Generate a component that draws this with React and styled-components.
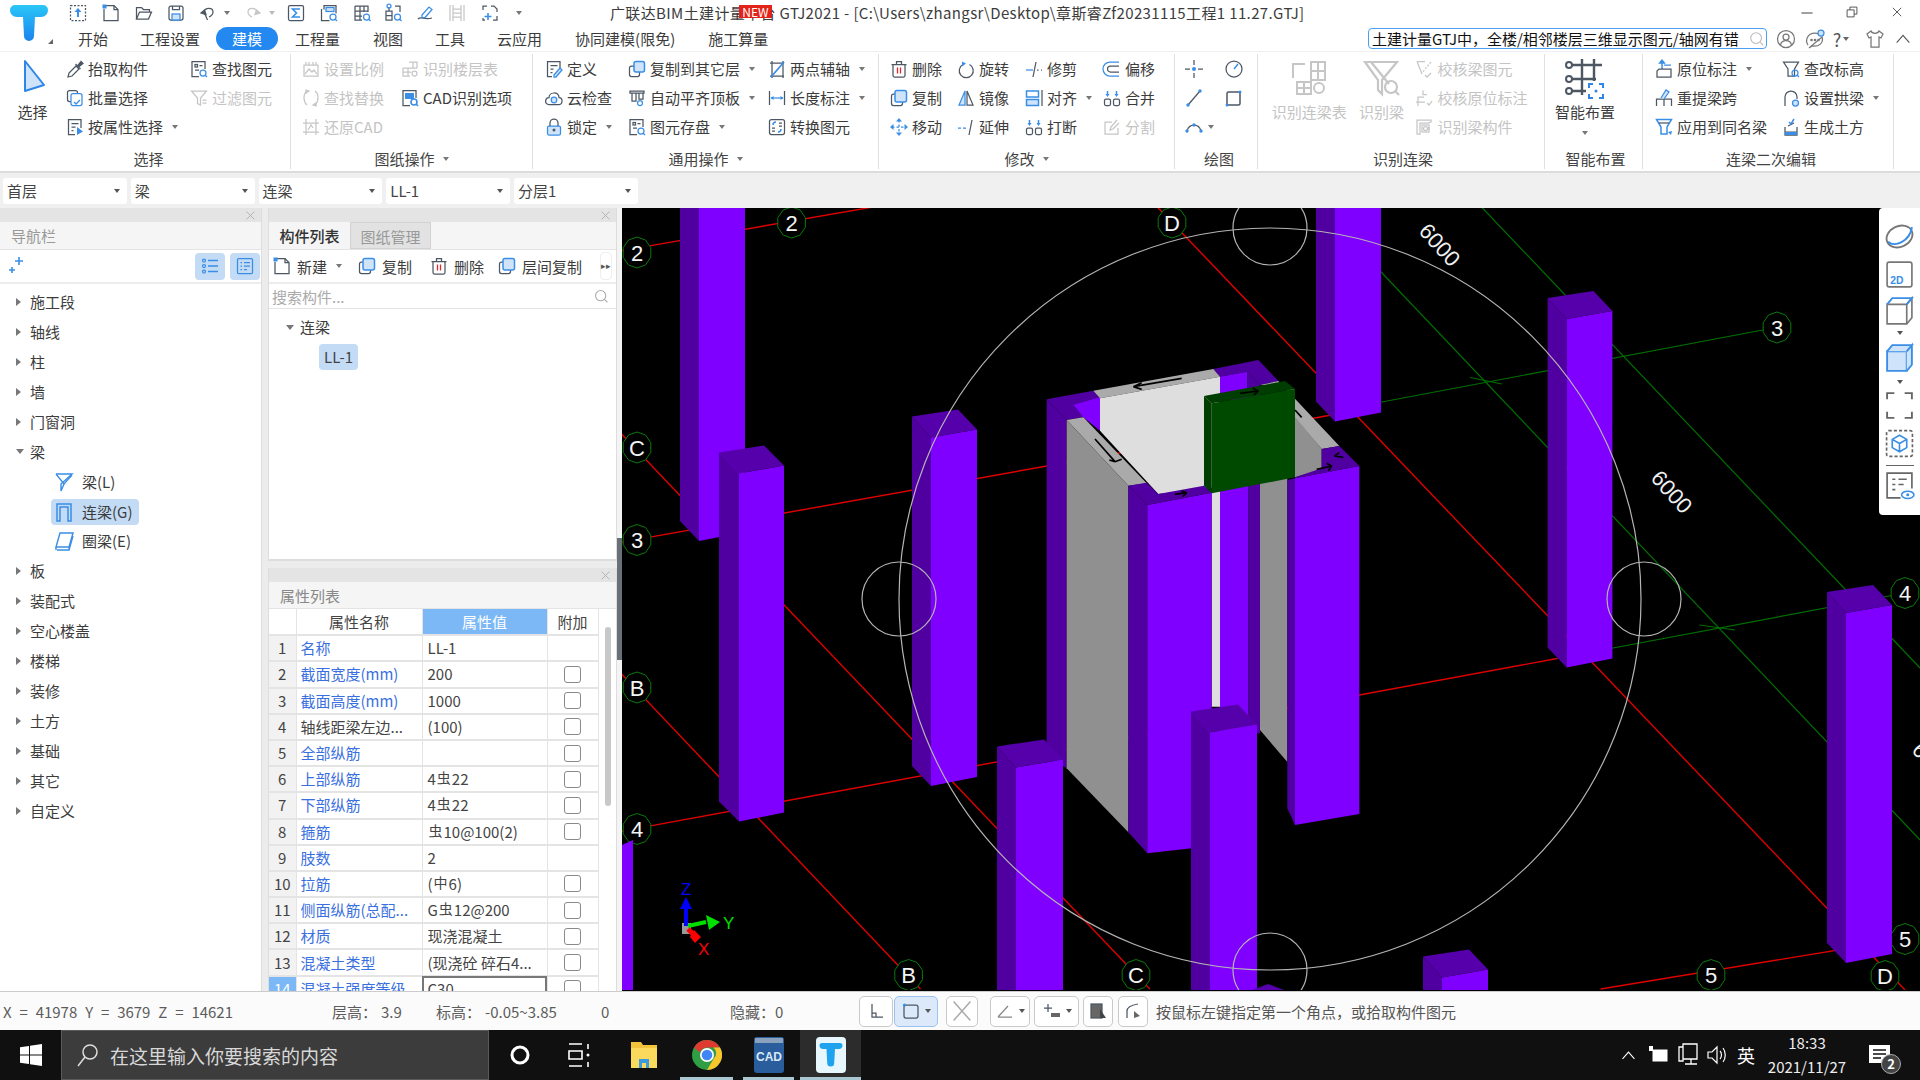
import React from 'react';
import styled, {createGlobalStyle} from 'styled-components';

const Global = createGlobalStyle`
    html, body {
        margin: 0;
        width: 1920px;
        height: 1080px;
        overflow: hidden;
        background: #f0f0f0;
    }
    * { box-sizing: border-box; }
    body {
        font-family: "Noto Sans CJK SC", "Liberation Sans", sans-serif;
        font-size: 15px;
        color: #3c3c3c;
    }
`;

const ac = 'var(--ac)', fl = 'var(--fl)';

// all small toolbar pictures, 20x20
const glyphs = {
    upload: <><rect x="2.5" y="2.5" width="15" height="15" strokeDasharray="2 1.5"/><path d="M10 14V7" stroke={ac} strokeWidth="2"/><path d="M6.5 9L10 5l3.5 4z" fill={ac} stroke="none"/></>,
    newDoc: <><path d="M5 2.5h8l4 4v11H3V6"/><path d="M13 2.5v4h4"/><rect x="1.5" y="1.5" width="4" height="4" fill={ac} stroke="none"/></>,
    open: <><path d="M2.5 16V4.500h5l2 2h6v2.500"/><path d="M2.500 16l3-7h12l-3 7z"/></>,
    save: <><rect x="3" y="3" width="14" height="14" rx="2"/><rect x="6" y="11" width="8" height="6" fill={fl} stroke={ac}/><path d="M6.500 3v3.500h7V3"/></>,
    undo: <><path d="M6 9l3.500 8M6 9c1-5 9-5 9 0 0 2.500-2 4-4 5"/><path d="M3 10l3.500-3 1.500 4.500z" fill="currentColor"/></>,
    redo: <><path d="M14 9c-1-5-9-5-9 0 0 2.500 2 4 4 5"/><path d="M17 10l-3.500-3-1.500 4.500z" fill="currentColor"/></>,
    sigma: <><rect x="2.500" y="2.500" width="15" height="15" rx="1.500"/><path d="M14 6H6.500l4 4-4 4H14" stroke={ac} strokeWidth="1.600"/></>,
    report: <><path d="M5 6.500V2.500h12v8"/><path d="M2.500 6v11.500h8"/><rect x="7" y="4.500" width="8" height="4" fill={fl} stroke={ac}/><circle cx="14" cy="14" r="3" stroke={ac}/><path d="M16 16l2 2" stroke={ac}/></>,
    grid: <><path d="M3 3h13v6M3 3v14h7M3 8h13M3 13h7M8 3v14M12 3v6"/><circle cx="14.500" cy="14" r="3" stroke={ac}/><path d="M16.500 16l2 2" stroke={ac}/></>,
    nodes: <><path d="M3 8h6v9H3zM12 3h5v6M3 12.500h6M6 8V4"/><circle cx="6" cy="3" r="2" stroke={ac}/><circle cx="14.500" cy="14" r="3" stroke={ac}/><path d="M16.500 16l2 2" stroke={ac}/></>,
    pen: <><path d="M3 16c3-3 6 1 14-1"/><path d="M7 12l7-8 3 2.500-7 8H7z" stroke={ac}/></>,
    ladder: <><path d="M3 2v16M6 2v16M14 2v16M17 2v16M6 6h8M6 10h8M6 14h8"/></>,
    addDoc: <><path d="M3 7V3h4M11 3h3l3 3v3M17 13v4h-4M5 17H3v-2"/><path d="M8 10v7M4.500 13.500h7" stroke={ac} strokeWidth="1.600"/></>,
    pick: <><path d="M3 18l1-4 7-7 3 3-7 7z"/><path d="M10.500 5l5 5M12.500 7l3.500-4.500 2 2-4.500 3.500" fill="#4d5763"/></>,
    batch: <><rect x="2.500" y="2.500" width="10" height="11" rx="2"/><rect x="6" y="5.500" width="11" height="12" rx="2" fill="#fff" stroke={ac}/><path d="M9 14l2 2 4-4" stroke={ac}/></>,
    attr: <><path d="M16 11V2.500H3.500v15H10"/><path d="M6.500 6.500h7M6.500 10h4M6.500 13.500h2"/><path d="M12 10l6 4.500-6 3.500z" fill={ac} stroke="none"/></>,
    find: <><path d="M10 17.500H3v-15h13V10"/><rect x="6" y="5.500" width="2.500" height="2.500"/><path d="M10.500 6.500h3M6 11h4"/><circle cx="14" cy="14" r="3" stroke={ac}/><path d="M16 16l2 2" stroke={ac}/></>,
    filter: <><path d="M2.500 3h15l-6 7v7l-3-1.500V10z"/><path d="M13.500 12h4M13.500 15h4"/></>,
    scale: <><path d="M3 6h14v11H3zM5 3v3M8 3v3M12 3v3M15 3v3"/><path d="M4 15l4-5 3 3 2-2 3 4"/></>,
    table: <><path d="M3 9h14M3 9v8h7M8 9v8M3 13h8M9 3h8v6M13 3v6"/><circle cx="14.500" cy="14.500" r="2.500"/></>,
    replace: <><path d="M6 3C2 6 2 13 6 17M14 3c4 3 4 10 0 14"/><path d="M8 3l-3-1v3zM12 17l3 1v-3z" fill="currentColor"/></>,
    restore: <><path d="M2 6h16M2 15h16M5 2v16M15 2v16"/><path d="M7 13l3-5 2 3" /></>,
    cad: <><path d="M10 17.500H3v-15h13V10"/><rect x="5" y="5" width="9" height="6" fill={ac} stroke="none"/><circle cx="14" cy="14" r="3" stroke={ac} strokeWidth="1.600"/><path d="M16 16l2 2" stroke={ac} strokeWidth="1.600"/></>,
    define: <><path d="M16 9V2.500H3.500v15H8"/><path d="M6.500 6.500h7M6.500 10h3M6.500 13.500h2"/><path d="M10 16l6-7 2 2-6 7h-2z" stroke={ac} fill={fl}/></>,
    cloud: <><path d="M5 16.500c-5 0-4-7 0-7C5 4 15 3 15 9.500c4 0 4 7 0 7z"/><circle cx="10" cy="12" r="2.800" stroke={ac} fill={fl}/></>,
    lock: <><rect x="3.500" y="9" width="13" height="9" rx="1.500" fill={fl} stroke={ac}/><path d="M6 9V6a4 4 0 0 1 8 0v3"/><circle cx="10" cy="13" r="1.500" fill="#4d5763" stroke="none"/></>,
    copyTo: <><rect x="2.500" y="7" width="10" height="10.500" rx="2"/><rect x="7" y="2.500" width="10.500" height="10.500" rx="2" fill={fl} stroke={ac} strokeWidth="1.500"/></>,
    levelTop: <><path d="M3 3h14v2H3zM5 5v8h4V5M12 5v6h4V5"/><circle cx="13" cy="15" r="2.500" stroke={ac}/></>,
    diskFind: <><path d="M10 17.500H3v-15h13V10"/><rect x="6" y="5.500" width="2.500" height="2.500"/><path d="M10.500 6.500h3M6 11h4"/><circle cx="14" cy="14" r="3" stroke={ac}/><path d="M16 16l2 2" stroke={ac}/></>,
    twoAxis: <><path d="M3 4h14M3 17h14M5 2v17M16 2v17"/><path d="M4 18L17 3" stroke={ac} strokeWidth="1.800"/></>,
    dim: <><path d="M2.500 3v14M17.500 3v14"/><path d="M4 10h12" stroke={ac}/><path d="M3.500 10l3-2v4zM16.500 10l-3-2v4z" fill={ac} stroke="none"/></>,
    convert: <><rect x="2.500" y="2.500" width="15" height="15" rx="2"/><path d="M6 8c0-2 1-3 3-3M14 12c0 2-1 3-3 3" stroke={ac} strokeWidth="1.500"/><path d="M12 6h3M5 14h3M12 9h3M5 11h3"/></>,
    del: <><path d="M4 5.500h12v11a1.500 1.500 0 0 1-1.500 1.500h-9A1.500 1.500 0 0 1 4 16.500zM2.500 5.500h15M7.500 5.500V2.500h5v3"/><path d="M8.500 8.500v6M11.500 8.500v6" stroke="#e0282e" strokeWidth="1.300"/></>,
    rotate: <><path d="M7 5.500a7 7 0 1 0 6.500 0"/><path d="M6 2.500v5l4-3z" fill={ac} stroke="none"/></>,
    mirror: <><path d="M9 3L3 17h6z" stroke={ac} fill={fl}/><path d="M11 3l6 14h-6z"/></>,
    trim: <><path d="M2 11h7" stroke={ac}/><path d="M13 11h1.500M17 11h1" strokeDasharray="2 1"/><path d="M9 18L12 3"/></>,
    offset: <><path d="M17 3H8a6.800 6.800 0 0 0 0 14h9" stroke={ac}/><path d="M17 7H8.500a2.800 2.800 0 0 0 0 6H17"/></>,
    copy: <><rect x="2.500" y="6" width="11" height="11.500" rx="2"/><rect x="6" y="2.500" width="11.500" height="11.500" rx="2" fill={fl} stroke={ac} strokeWidth="1.500"/></>,
    alignB: <><path d="M18 2v16"/><rect x="2.500" y="3" width="12" height="6" fill="#fff" stroke={ac} strokeWidth="1.500"/><rect x="2.500" y="11.500" width="12" height="6" fill={fl} stroke={ac} strokeWidth="1.500"/></>,
    merge: <><rect x="2.500" y="11" width="6" height="6.500" rx="1.500"/><rect x="11.500" y="11" width="6" height="6.500" rx="1.500"/><path d="M5.500 3v3M14.500 3v3" stroke={ac} strokeWidth="1.500"/><path d="M5.500 9l-2-3h4zM14.500 9l-2-3h4z" fill={ac} stroke="none"/></>,
    move: <><path d="M10 3v14M3 10h14" stroke={ac} strokeDasharray="2.500 2"/><path d="M10 1l-3 3.500h6zM10 19l-3-3.500h6zM1 10l3.500-3v6zM19 10l-3.500-3v6z" fill={ac} stroke="none"/></>,
    extend: <><path d="M2 11h8" stroke={ac} strokeDasharray="3 2"/><path d="M13 18L16 3"/></>,
    split: <><path d="M15 3L9 10l-1 3 3-1 6-6M16 11v6H3V5h7"/></>,
    point: <><path d="M10 1v5M10 14v5M1 10h5M14 10h5"/><circle cx="10" cy="10" r="2" fill={ac} stroke="none"/></>,
    dial: <><circle cx="10" cy="10" r="8"/><path d="M10 10l4-5" stroke={ac} strokeWidth="1.500"/></>,
    lineTool: <><path d="M4 17L16 3"/><circle cx="4" cy="17" r="1.700" fill={ac} stroke="none"/><circle cx="16" cy="3" r="1.700" fill={ac} stroke="none"/></>,
    rectTool: <><rect x="3" y="4" width="13" height="13" rx="1.500" strokeWidth="1.500"/><circle cx="16" cy="4" r="1.500" fill={ac} stroke="none"/><circle cx="3" cy="17" r="1.500" fill={ac} stroke="none"/></>,
    arc: <><path d="M3 14c2-8 12-8 14 0"/><circle cx="3" cy="14" r="1.700" fill={ac} stroke="none"/><circle cx="10" cy="8" r="1.700" fill={ac} stroke="none"/><circle cx="17" cy="14" r="1.700" fill={ac} stroke="none"/></>,
    check: <><path d="M3 2.500h8M3 2.500L8 15"/><path d="M17 3l-9 11" strokeDasharray="2 1.500"/><path d="M11 16l2 2 4-4"/></>,
    checkAnno: <><path d="M9 2.500v4h4M4 18V9h6M2 14h9M13 15l2 2 3-4"/></>,
    beamParts: <><path d="M3 3h14v2l-3 1H6v11H3zM15 13v-3"/><rect x="8" y="8" width="7" height="7"/><circle cx="11.500" cy="11.500" r="2"/></>,
    anno: <><path d="M8 2v8" stroke={ac} strokeWidth="1.500"/><path d="M8 1L5.500 4h5zM10 6h7" fill={ac} stroke={ac}/><path d="M5 10h12v8H3v-6z"/></>,
    elev: <><path d="M2.500 3h15l-4 7v7H7V10z"/><circle cx="14" cy="14" r="3" stroke={ac}/><path d="M16 16l2 2" stroke={ac}/></>,
    respan: <><path d="M2.500 18v-7h15v7M10 11v7"/><path d="M7 10l5-8 3 2-5 7" stroke={ac} fill={fl}/></>,
    arch: <><path d="M4 18v-9a6 6 0 0 1 12 0v2"/><circle cx="14.500" cy="15" r="3" fill={fl} stroke={ac}/></>,
    sameName: <><path d="M2.500 2.500h15L13 10v7H7v-7z" stroke={ac} strokeWidth="1.500"/><path d="M5 6h10"/><path d="M14 15l3 3 1-4z" fill={ac} stroke="none"/></>,
    earth: <><path d="M4 10v8h12v-8M4 15h12M7 9l6-3"/><rect x="4" y="15" width="12" height="3" fill={ac} stroke="none"/><path d="M8 5l2 2 3-5" stroke={ac} strokeWidth="1.500"/></>,
    sparkle: <><path d="M12 1v8M8 5h8M5 11v6M2 14h6" stroke={ac} strokeWidth="1.600"/></>,
    listView: <><circle cx="4" cy="4.500" r="1.500" stroke={ac}/><circle cx="4" cy="10" r="1.500" stroke={ac}/><circle cx="4" cy="15.500" r="1.500" stroke={ac}/><path d="M8 4.500h10M8 10h10M8 15.500h10" stroke={ac} strokeWidth="1.400"/></>,
    detailView: <><rect x="2.500" y="2.500" width="15" height="15" rx="1" stroke={ac}/><path d="M5.500 6.500h1.500M9 6.500h6M5.500 10h1.500M9 10h6M5.500 13.500h1.500M9 13.500h3" stroke={ac}/></>,
    beamL: <><path d="M2 2h16L7 12v7l3-7" stroke={ac} strokeWidth="1.400"/><path d="M2 2l8 10 8-9" stroke={ac} strokeWidth="1.400"/></>,
    beamG: <><path d="M3 19V2h14v17h-3V5H6v14z" stroke={ac} strokeWidth="1.500"/></>,
    beamE: <><path d="M6 2h13l-4 14H2z" stroke={ac} strokeWidth="1.400"/><path d="M3 19h12l4-14M2 16v3M15 16v3" stroke={ac} strokeWidth="1.400"/></>,
    search: <><circle cx="9" cy="9" r="6"/><path d="M13.500 13.500L17 17"/></>,
    user: <><circle cx="10" cy="10" r="8.500"/><circle cx="10" cy="8" r="3"/><path d="M4.500 16c1-6 10-6 11 0"/></>,
    chat: <><path d="M3 16c-3-4-1-12 7-12 2 0 3 1 3 1M17 8c2 6-3 10-10 9l-3 2z"/><circle cx="6.500" cy="11" r=".7"/><circle cx="10" cy="11" r=".7"/><circle cx="13.500" cy="11" r=".7"/><circle cx="16" cy="4" r="3" fill={fl} stroke={ac}/></>,
    shirt: <><path d="M6 2L2 5l2 4 2-1v10h8V8l2 1 2-4-4-3c-1 3-7 3-8 0z"/></>,
    up: <><path d="M3 14l7-8 7 8"/></>,
    thin: <><path d="M3 10h14"/></>,
    win2: <><path d="M7 7V3h10v10h-4M3 7h10v10H3z"/></>,
    close: <><path d="M4 4l12 12M16 4L4 16"/></>
};

const Ic = styled.svg`
    width: ${p => p.$size || 20}px;
    height: ${p => p.$size || 20}px;
    flex: none;
    display: block;
    fill: none;
    stroke: currentColor;
    stroke-width: 1.25;
    color: ${p => p.$off ? '#c6c6c6' : (p.$tint || '#4d5763')};
    --ac: ${p => p.$off ? '#c6c6c6' : '#3a8ee6'};
    --fl: ${p => p.$off ? '#f2f2f2' : '#cfe3fa'};
`;

const G = ({n, off, size, tint}) => (
    <Ic viewBox="0 0 20 20" $off={off} $size={size} $tint={tint}>{glyphs[n]}</Ic>
);

const Page = styled.div`
    width: 1920px;
    height: 1080px;
    display: flex;
    flex-direction: column;
    overflow: hidden;
`;

/* ---- top of the window ---- */
const Header = styled.div`
    height: 51px;
    display: flex;
    background: #fff;
`;
const LogoCell = styled.div`
    width: 62px;
    position: relative;
    padding: 5px 0 0 10px;
`;
const LogoCorner = styled.i`
    position: absolute;
    left: 48px;
    top: 39px;
    border-style: solid;
    border-width: 0 0 5px 5px;
    border-color: transparent transparent #666 transparent;
`;
const HeadRows = styled.div`
    flex: 1;
    display: flex;
    flex-direction: column;
`;
const TitleRow = styled.div`
    height: 26px;
    display: flex;
    align-items: center;
`;
const Quick = styled.div`
    width: 548px;
    display: flex;
    align-items: center;
`;
const QuickSlot = styled.div`
    width: ${p => p.$w}px;
    display: flex;
    align-items: center;
    justify-content: ${p => p.$left ? 'flex-start' : 'center'};
    padding-left: ${p => p.$left || 0}px;
    gap: 6px;
`;
const Title = styled.div`
    position: relative;
    white-space: nowrap;
    line-height: 20px;
    letter-spacing: .37px;
`;
const NewBadge = styled.span`
    position: absolute;
    left: 129px;
    top: 2px;
    width: 33px;
    height: 13px;
    background: #e2231a;
    color: #fff;
    font-size: 12px;
    line-height: 13px;
    letter-spacing: 0;
    text-align: center;
`;
const WinBtns = styled.div`
    margin-left: auto;
    padding-right: 1px;
    display: flex;
`;
const WinBtn = styled.div`
    width: 45px;
    display: flex;
    justify-content: center;
`;
const TabRow = styled.div`
    height: 25px;
    display: flex;
    align-items: center;
`;
const Tab = styled.div`
    height: 23px;
    padding: 0 ${p => p.$wide ? 17 : 16}px;
    line-height: 23px;
    white-space: nowrap;
    border-radius: 12px;
    background: ${p => p.$on ? '#2389f0' : 'transparent'};
    color: ${p => p.$on ? '#fff' : '#3c3c3c'};
`;
const HelpBox = styled.div`
    margin-left: auto;
    width: 399px;
    height: 21px;
    border: 1px solid #4aa0f0;
    border-radius: 4px;
    padding-left: 3px;
    display: flex;
    align-items: center;
    justify-content: space-between;
    color: #111;
    line-height: 19px;
    white-space: nowrap;
    overflow: hidden;
`;
const HeadIcons = styled.div`
    display: flex;
    align-items: center;
    padding-right: 8px;
`;
const HeadIcon = styled.div`
    width: ${p => p.$w}px;
    display: flex;
    justify-content: center;
    align-items: center;
    color: #555;
    font-size: 18px;
    line-height: 20px;
`;

const Caret = styled.i`
    flex: none;
    display: inline-block;
    margin-left: ${p => p.$ml || 0}px;
    margin-top: ${p => p.$mt || 0}px;
    border-style: solid;
    border-width: 4px 3.5px 0 3.5px;
    border-color: ${p => p.$c || '#777'} transparent transparent transparent;
`;

/* ---- ribbon ---- */
const Ribbon = styled.div`
    height: 122px;
    display: flex;
    background: #fff;
    border-top: 1px solid #f0f0f0;
    border-bottom: 2px solid #dcdcdc;
`;
const Group = styled.div`
    width: ${p => p.$w}px;
    display: flex;
    flex-direction: column;
    border-right: 1px solid #e0e0e0;
    margin: 2px 0 2px 0;
`;
const GroupBody = styled.div`
    height: 95px;
    display: flex;
    padding-left: ${p => p.$pl || 0}px;
`;
const GroupFoot = styled.div`
    flex: 1;
    display: flex;
    align-items: center;
    justify-content: center;
    padding-left: ${p => p.$pl || 0}px;
    color: #444;
    white-space: nowrap;
`;
const Col = styled.div`
    width: ${p => p.$w}px;
    display: flex;
    flex-direction: column;
`;
const ToolRow = styled.div`
    height: 29px;
    display: flex;
    align-items: center;
    gap: 3px;
    white-space: nowrap;
    line-height: 20px;
    color: ${p => p.$off ? '#c4c4c4' : '#3c3c3c'};
`;
const BigTool = styled.div`
    width: ${p => p.$w}px;
    display: flex;
    flex-direction: column;
    align-items: center;
    white-space: nowrap;
    color: ${p => p.$off ? '#c4c4c4' : '#3c3c3c'};
    line-height: 20px;
`;
const BigPic = styled.div`
    height: 46px;
    padding-top: 4px;
    margin-bottom: 2px;
`;
const Tool = ({g, t, off, menu}) => (
    <ToolRow $off={off}>
        <G n={g} off={off}/>
        <span>{t}</span>
        {menu && <Caret $ml={6}/>}
    </ToolRow>
);
const IconRow = styled.div`
    height: 29px;
    display: flex;
    align-items: center;
    gap: 4px;
`;

/* ---- selectors ---- */
const SelectBar = styled.div`
    height: 35px;
    padding: 5px 3px 4px;
    display: flex;
    gap: 4px;
    background: #f0f0f0;
`;
const Select = styled.div`
    width: 123.750px;
    background: #fff;
    border-radius: 3px;
    padding: 0 7px 0 4px;
    display: flex;
    align-items: center;
    justify-content: space-between;
    line-height: 20px;
    color: #444;
`;

/* ---- panels ---- */
const Main = styled.div`
    height: 783px;
    display: flex;
    background: #ececec;
`;
const NavPanel = styled.div`
    width: 262px;
    display: flex;
    flex-direction: column;
    background: #fff;
    border-right: 1px solid #ddd;
`;
const Strip = styled.div`
    height: 14px;
    flex: none;
    background: #e4e4e4;
    display: flex;
    justify-content: flex-end;
    align-items: center;
    padding-right: 4px;
`;
const PanelHead = styled.div`
    height: 28px;
    flex: none;
    padding-left: 11px;
    display: flex;
    align-items: center;
    background: #f5f5f5;
    color: #999;
    border-bottom: 1px solid #e4e4e4;
`;
const ToolStrip = styled.div`
    height: 34px;
    flex: none;
    display: flex;
    align-items: center;
    background: #fff;
    border-bottom: 2px solid #ececec;
`;
const SparkBox = styled.span`
    margin-left: 7px;
`;
const ViewToggle = styled.div`
    width: 30px;
    height: 27px;
    margin-left: ${p => p.$ml || 0}px;
    border-radius: 4px;
    background: #c3dbf4;
    display: flex;
    align-items: center;
    justify-content: center;
`;
const Tree = styled.div`
    padding-top: 3px;
    flex: 1;
`;
const TreeRow = styled.div`
    height: 29.940px;
    display: flex;
    align-items: center;
    padding-left: ${p => p.$child ? 51 : 16}px;
    line-height: 20px;
    white-space: nowrap;
`;
const Arrow = styled.i`
    width: 14px;
    flex: none;
    &::before {
        content: '';
        display: block;
        margin-left: 0;
        border-style: solid;
        border-width: ${p => p.$open ? '5px 4px 0 4px' : '4px 0 4px 5px'};
        border-color: ${p => p.$open ? '#777 transparent transparent transparent' : 'transparent transparent transparent #777'};
        width: 0;
    }
`;
const ChildPill = styled.div`
    height: 26px;
    width: 88px;
    border-radius: 4px;
    padding-left: 3px;
    display: flex;
    align-items: center;
    gap: 8px;
    background: ${p => p.$on ? '#c3dbf4' : 'transparent'};
`;
const MidColumn = styled.div`
    margin-left: 6px;
    width: 349px;
    display: flex;
    flex-direction: column;
    gap: 7px;
`;
const Gutter = styled.div`
    width: 5px;
    flex: none;
    position: relative;
    background: #f4f4f4;
`;
const Splitter = styled.div`
    position: absolute;
    left: 0;
    top: 330px;
    width: 5px;
    height: 122px;
    background: #6a7078;
`;
const ListPanel = styled.div`
    height: 353px;
    display: flex;
    flex-direction: column;
    background: #fff;
    border: solid #ddd;
    border-width: 0 1px 2px 1px;
`;
const TabHead = styled.div`
    height: 28px;
    flex: none;
    display: flex;
    background: #f5f5f5;
    border-bottom: 1px solid #e4e4e4;
`;
const PanelTab = styled.div`
    width: 81px;
    text-align: center;
    line-height: 28px;
    font-weight: ${p => p.$on ? 500 : 400};
    color: ${p => p.$on ? '#333' : '#999'};
    background: ${p => p.$on ? '#f5f5f5' : '#e2e2e2'};
    border: ${p => p.$on ? 'none' : '1px solid #d2d2d2'};
`;
const ListTool = styled.div`
    display: flex;
    align-items: center;
    gap: ${p => p.$gap || 5}px;
    margin-left: ${p => p.$ml}px;
    white-space: nowrap;
`;
const MoreBtn = styled.div`
    margin-left: 18px;
    width: 12px;
    height: 28px;
    border-radius: 4px;
    border: 1px solid #eee;
    font-size: 9px;
    line-height: 26px;
    text-align: center;
    color: #555;
`;
const SearchRow = styled.div`
    height: 25px;
    flex: none;
    padding: 0 6px 0 3px;
    display: flex;
    align-items: center;
    justify-content: space-between;
    border-bottom: 1px solid #e4e4e4;
    color: #aaa;
`;
const CompRoot = styled.div`
    margin: 8px 0 0 17px;
    height: 20px;
    display: flex;
    align-items: center;
    line-height: 20px;
`;
const CompItem = styled.div`
    margin: 7px 0 0 50px;
    width: 39px;
    height: 26px;
    border-radius: 4px;
    background: #c3dbf4;
    text-align: center;
    line-height: 26px;
    color: #444;
`;
const AttrPanel = styled.div`
    flex: 1;
    min-height: 0;
    display: flex;
    flex-direction: column;
    background: #fff;
    border: solid #ddd;
    border-width: 0 1px;
`;
const AttrHead = styled(PanelHead)`
    color: #888;
    height: 27px;
`;
const AttrBody = styled.div`
    flex: 1;
    min-height: 0;
    display: flex;
    overflow: hidden;
`;
const AttrTable = styled.table`
    width: 329px;
    height: 0;
    flex: none;
    table-layout: fixed;
    border-collapse: collapse;
    line-height: 20px;
    td, th {
        height: 26.200px;
        padding: 0;
        border: solid #e4e4e4;
        border-width: 0 1px 2px 0;
        font-weight: 400;
        white-space: nowrap;
        overflow: hidden;
    }
`;
const TableCol = styled.col`
    width: ${p => p.$w}px;
`;
const HeadCell = styled.th`
    background: ${p => p.$on ? '#7cb8f5' : '#fff'};
    color: ${p => p.$on ? '#fff' : '#444'};
`;
const NumCell = styled.td`
    text-align: center;
    background: ${p => p.$on ? '#7cb8f5' : '#f2f2f2'};
    color: ${p => p.$on ? '#fff' : '#444'};
`;
const NameCell = styled.td`
    padding-left: 4px !important;
    color: ${p => p.$plain ? '#444' : '#3a6fe0'};
`;
const ValueCell = styled.td`
    padding-left: 5px !important;
    color: #444;
    ${p => p.$on && 'outline: 2px solid #777; outline-offset: -2px;'}
`;
const CheckCell = styled.td`
    text-align: center;
`;
const CheckBox = styled.i`
    display: block;
    margin: 0 auto;
    width: 17px;
    height: 17px;
    border: 1px solid #8a8a8a;
    border-radius: 3px;
`;
const Rebar = styled.span`
    position: relative;
    top: -2px;
    font-size: 14px;
    margin: 0 1px;
`;
const ScrollTrack = styled.div`
    flex: 1;
    padding: 18px 5px 0 6px;
`;
const ScrollThumb = styled.div`
    height: 179px;
    border-radius: 5px;
    background: #c8c8c8;
`;

/* ---- canvas ---- */
const Canvas = styled.div`
    flex: 1;
    position: relative;
    background: #000;
    overflow: hidden;
`;
const SceneSvg = styled.svg`
    display: block;
`;
const SideBar = styled.div`
    position: absolute;
    right: 0;
    top: 0;
    width: 41px;
    height: 307px;
    padding-top: 9px;
    background: #fff;
    border-radius: 4px 0 0 4px;
    display: flex;
    flex-direction: column;
    align-items: center;
`;
const SideSlot = styled.div`
    height: ${p => p.$h}px;
    flex: none;
    display: flex;
    align-items: center;
    justify-content: center;
`;
const SideRule = styled.div`
    width: 28px;
    height: 1px;
    flex: none;
    background: #666;
`;

/* ---- status ---- */
const StatusBar = styled.div`
    height: 39px;
    display: flex;
    align-items: center;
    background: #fbfbfb;
    border-top: 1px solid #ccc;
    padding-left: 3px;
    white-space: nowrap;
    color: #5c5c5c;
    font-size: 15px;
`;
const Read = styled.span`
    width: ${p => p.$w}px;
    flex: none;
    word-spacing: ${p => p.$ws || 0}px;
`;
const StatusBtn = styled.div`
    width: ${p => p.$w}px;
    height: 31px;
    margin-left: ${p => p.$ml || 0}px;
    flex: none;
    border: 1px solid ${p => p.$on ? '#9cc3ef' : '#c9c9c9'};
    border-radius: 5px;
    background: ${p => p.$on ? '#dbe9fb' : '#fff'};
    display: flex;
    align-items: center;
    justify-content: center;
    gap: 4px;
`;
const Hint = styled.span`
    margin-left: 8px;
    font-size: 15px;
    color: #555;
`;

/* ---- taskbar ---- */
const Taskbar = styled.div`
    height: 50px;
    display: flex;
    background: #101010;
    color: #fff;
`;
const StartBtn = styled.div`
    width: 61px;
    display: flex;
    align-items: center;
    justify-content: center;
`;
const TaskSearch = styled.div`
    width: 428px;
    display: flex;
    align-items: center;
    padding-left: 14px;
    gap: 12px;
    background: #3c3c3c;
    border: 1px solid #5a5a5a;
    font-size: 19px;
    color: #d8d8d8;
    white-space: nowrap;
`;
const TaskSlot = styled.div`
    width: ${p => p.$w}px;
    margin-left: ${p => p.$ml || 0}px;
    display: flex;
    align-items: center;
    justify-content: center;
    background: ${p => p.$active ? '#2c2c2c' : 'transparent'};
    border-bottom: 3px solid ${p => p.$open ? '#a9c7d3' : 'transparent'};
    padding-top: 3px;
`;
const Tray = styled.div`
    margin-left: auto;
    padding-right: 13px;
    display: flex;
    align-items: stretch;
`;
const TraySlot = styled.div`
    width: ${p => p.$w}px;
    display: flex;
    align-items: center;
    justify-content: center;
    position: relative;
    font-size: ${p => p.$fs || 15}px;
`;
const Clock = styled.div`
    width: 92px;
    display: flex;
    flex-direction: column;
    align-items: center;
    justify-content: center;
    font-size: 15px;
    line-height: 24px;
    color: #eee;
`;
const NoteBadge = styled.span`
    position: absolute;
    left: 28px;
    top: 24px;
    width: 20px;
    height: 20px;
    border-radius: 50%;
    background: #444;
    border: 1px solid #aaa;
    font-size: 13px;
    font-weight: 700;
    line-height: 18px;
    text-align: center;
`;

/* ---- the 3D view ---- */
const Z = (x, y) => [620 + x * .7908, 205 + y * .5];
const purple = '#8000ff', purpleDark = '#5000a0', purpleTop = '#5500aa';

const redLines = [
    [0, 92, 320, 4], [0, 675, 960, 403], [0, 1253, 1185, 907], [1240, 1568, 1625, 1468],
    [680, 5, 1625, 1570], [0, 455, 670, 1568], [0, 935, 380, 1568]
];
const greenLines = [
    [960, 395, 1445, 250], [1185, 907, 1625, 776], [960, 130, 1644, 1270], [1090, 5, 1644, 926],
    [1075, 345, 1115, 358], [1365, 840, 1410, 850]
];
const pillars = [
    [680, 699, 745, 150, 541],
    [719, 739, 784, 473.500, 821.500],
    [912, 931, 977, 437.500, 786],
    [1316, 1335, 1381, 100, 421.500],
    [1547.600, 1566.600, 1612.400, 319, 667.500],
    [1827, 1846, 1892, 613, 963],
    [1423, 1442, 1488, 977.500, 1200]
];
const frontPillars = [
    [997, 1016, 1063, 767.500, 1200],
    [1191, 1210, 1257, 732.500, 1200]
];
const bubbles = [
    ['2', 637, 252.500], ['2', 791.600, 222.500], ['D', 1172, 222.500], ['3', 1777, 327.500],
    ['C', 637, 447.500], ['3', 637, 540], ['B', 637, 687.500], ['4', 637, 829],
    ['B', 908.600, 975], ['C', 1136, 975], ['5', 1711, 975], ['D', 1885, 976],
    ['5', 1905, 939], ['4', 1905, 593]
];

const Pillar = ({p: [xL, xM, xR, top, bot]}) => {
    const b = xL + (xR - xM);
    return (
        <>
            <polygon fill={purpleDark} points={`${xL},${top - 21} ${xM},${top} ${xM},${bot} ${xL},${bot - 20}`}/>
            <polygon fill={purple} points={`${xM},${top} ${xR},${top - 8} ${xR},${bot - 9} ${xM},${bot}`}/>
            <polygon fill={purpleTop} points={`${xL},${top - 21} ${b},${top - 28} ${xR},${top - 8} ${xM},${top}`}/>
        </>
    );
};

const Bubble = ({t, x, y}) => {
    const pts = Array.from({length: 10}, (_, i) => {
        const a = i / 10 * Math.PI * 2 + Math.PI / 10;
        return `${(x + Math.cos(a) * 14.500).toFixed(1)},${(y + Math.sin(a) * 15.500).toFixed(1)}`;
    }).join(' ');
    return (
        <>
            <polygon points={pts} fill="#000" stroke="#0b7a0b" strokeWidth="1"/>
            <text x={x} y={y + 8} textAnchor="middle" fill="#f4f4f4" fontSize="22" fontFamily='"Liberation Sans", sans-serif'>{t}</text>
        </>
    );
};

const Core = () => (
    <g transform="translate(1000 340) scale(.33333)">
        <polygon fill={purpleDark} points="140,178 200,240 200,1285 140,1245"/>
        <polygon fill={purpleDark} points="640,87 775,60 835,123 780,135 742,95 660,110"/>
        <polygon fill={purple} points="660,110 742,95 742,180 660,180"/>
        <polygon fill={purpleDark} points="742,95 780,135 780,180 742,180"/>
        <polygon fill={purpleDark} points="140,178 280,152 300,175 300,190 220,195 250,232 200,240"/>
        <polygon fill={purple} points="220,195 300,172 300,272 250,232"/>
        <polygon fill="#aaa" points="280,152 640,87 660,110 300,175"/>
        <polygon fill="#dedede" points="300,175 660,110 660,440 475,462 300,272"/>
        <polygon fill="#aaa" points="200,240 250,232 440,430 385,437"/>
        <polygon fill="#909090" points="200,240 385,437 385,1477 200,1285"/>
        <polygon fill="#aaa" points="780,135 835,123 1018,318 965,327 885,235 885,147"/>
        <polygon fill="#909090" points="885,230 965,327 965,390 885,412"/>
        <polygon fill="#dedede" points="635,450 660,450 660,1100 635,1100"/>
        <polygon fill={purple} points="660,440 745,425 745,1180 660,1180"/>
        <polygon fill={purpleDark} points="745,425 780,418 780,1180 745,1180"/>
        <polygon fill="#909090" points="780,418 862,410 862,1266 780,1170"/>
        <polygon fill={purpleDark} points="862,420 885,415 885,1455 862,1405"/>
        <polygon fill={purple} points="885,415 1078,378 1078,1422 885,1455"/>
        <polygon fill={purpleDark} points="885,412 965,385 965,327 1018,318 1078,378 885,415"/>
        <polygon fill={purpleDark} points="385,437 442,495 442,1540 385,1477"/>
        <polygon fill={purple} points="442,495 635,458 635,1518 442,1540"/>
        <polygon fill={purpleDark} points="385,437 440,428 475,462 612,437 635,458 442,495"/>
        <polygon fill="#003d00" points="612,168 855,123 885,147 635,190"/>
        <polygon fill="#003d00" points="612,168 635,190 635,460 612,437"/>
        <polygon fill="#004a00" points="635,190 885,147 885,412 635,460"/>
        <g fill="none" stroke="#000" strokeWidth="5">
            <path d="M400,140 L545,115 M400,140 L425,128 M400,140 L425,148"/>
            <path d="M285,297 L345,365 M345,365 L328,360 M345,365 L365,358"/>
            <path d="M525,463 L560,458 M560,458 L545,452 M560,458 L548,470"/>
            <path d="M720,160 L775,153 M775,153 L758,145 M775,153 L762,165"/>
            <path d="M950,388 L995,378 M995,378 L980,370 M995,378 L985,392"/>
            <path d="M1003,348 L1030,352 M1003,348 L1018,338"/>
            <path d="M885,210 L905,232"/>
        </g>
    </g>
);

const Scene = () => (
    <SceneSvg viewBox="622 208 1298 782" width="1298" height="782">
        {greenLines.map(([a, b, c, d], i) => {
            const [x1, y1] = Z(a, b), [x2, y2] = Z(c, d);
            return <line key={i} x1={x1} y1={y1} x2={x2} y2={y2} stroke="#006f00" strokeWidth="1.200"/>;
        })}
        {redLines.map(([a, b, c, d], i) => {
            const [x1, y1] = Z(a, b), [x2, y2] = Z(c, d);
            return <line key={i} x1={x1} y1={y1} x2={x2} y2={y2} stroke="#e00000" strokeWidth="1.400"/>;
        })}
        {bubbles.map(([t, x, y], i) => <Bubble key={i} t={t} x={x} y={y}/>)}
        {pillars.map((p, i) => <Pillar key={i} p={p}/>)}
        <polygon fill={purple} points="622,845 633,840 633,990 622,990"/>
        <Core/>
        {frontPillars.map((p, i) => <Pillar key={i} p={p}/>)}
        <polygon fill={purpleTop} points="1252,990 1268,984 1284,990"/>
        <g fill="none" stroke="#b4b4b4" strokeWidth="1.200">
            <circle cx="1270" cy="599" r="371"/>
            <circle cx="1270" cy="228" r="37"/>
            <circle cx="899" cy="599" r="37"/>
            <circle cx="1644" cy="599" r="37"/>
            <circle cx="1270" cy="970" r="37"/>
        </g>
        <g fill="#f0f0f0" fontSize="22" fontFamily='"Liberation Sans", sans-serif' textAnchor="middle">
            <text transform="translate(1434 250) rotate(48)">6000</text>
            <text transform="translate(1666 497) rotate(48)">6000</text>
            <text transform="translate(1927 769) rotate(48)">6000</text>
        </g>
        <g transform="translate(2 1)">
            <rect x="680" y="922" width="9" height="11" fill="#999"/>
            <path d="M684 925v-17" stroke="#0000ff" strokeWidth="4"/>
            <path d="M684 896l-6 12h12z" fill="#0000ff"/>
            <path d="M686 925l18-4" stroke="#00e000" strokeWidth="4"/>
            <path d="M718 921l-14-7 3 15z" fill="#00e000"/>
            <path d="M686 928l9 9" stroke="#ff0000" strokeWidth="5"/>
            <path d="M692 929l7 7-6 6-5-6z" fill="#ff0000"/>
            <g fontSize="17" fontFamily='"Liberation Sans", sans-serif'>
                <text x="679" y="894" fill="#0000ff">Z</text>
                <text x="721" y="928" fill="#00e000">Y</text>
                <text x="696" y="954" fill="#ff0000">X</text>
            </g>
        </g>
    </SceneSvg>
);

const Sym = ({c = '虫'}) => <Rebar>{c}</Rebar>;

const attrs = [
    ['名称', 'LL-1', false],
    ['截面宽度(mm)', '200', true],
    ['截面高度(mm)', '1000', true],
    ['轴线距梁左边...', '(100)', true, true],
    ['全部纵筋', '', true],
    ['上部纵筋', <>4<Sym/>22</>, true],
    ['下部纵筋', <>4<Sym/>22</>, true],
    ['箍筋', <><Sym/>10@100(2)</>, true],
    ['肢数', '2', false],
    ['拉筋', <>(<Sym c="中"/>6)</>, true],
    ['侧面纵筋(总配...', <>G<Sym/>12@200</>, true],
    ['材质', '现浇混凝土', true],
    ['混凝土类型', '(现浇砼 碎石4...', true],
    ['混凝土强度等级', 'C30', true]
];

const navItems = ['施工段', '轴线', '柱', '墙', '门窗洞'];
const navItemsAfter = ['板', '装配式', '空心楼盖', '楼梯', '装修', '土方', '基础', '其它', '自定义'];

const Logo = () => (
    <svg width="38" height="36" viewBox="0 0 38 36">
        <defs>
            <linearGradient id="tg" x1="0" y1="0" x2="0" y2="1">
                <stop offset="0" stopColor="#2ac6f7"/>
                <stop offset="1" stopColor="#1a84ee"/>
            </linearGradient>
        </defs>
        <path d="M5 0h28a5 5 0 0 1 5 5c0 4-3 7-7 7h-6l-1 19a5 5 0 0 1-10 0l-1-19H7C3 12 0 9 0 5a5 5 0 0 1 5-5z" fill="url(#tg)"/>
    </svg>
);

const App = () => (
    <Page>
        <Global/>
        <Header>
            <LogoCell>
                <Logo/>
                <LogoCorner/>
            </LogoCell>
            <HeadRows>
                <TitleRow>
                    <Quick>
                        <QuickSlot $w={32}><G n="upload"/></QuickSlot>
                        <QuickSlot $w={33}><G n="newDoc"/></QuickSlot>
                        <QuickSlot $w={33}><G n="open"/></QuickSlot>
                        <QuickSlot $w={32}><G n="save"/></QuickSlot>
                        <QuickSlot $w={48} $left={6}><G n="undo"/><Caret/></QuickSlot>
                        <QuickSlot $w={40} $left={3}><G n="redo" off/><Caret $c="#bbb"/></QuickSlot>
                        <QuickSlot $w={32}><G n="sigma"/></QuickSlot>
                        <QuickSlot $w={34}><G n="report"/></QuickSlot>
                        <QuickSlot $w={31}><G n="grid"/></QuickSlot>
                        <QuickSlot $w={32}><G n="nodes"/></QuickSlot>
                        <QuickSlot $w={32}><G n="pen"/></QuickSlot>
                        <QuickSlot $w={32}><G n="ladder" off/></QuickSlot>
                        <QuickSlot $w={34}><G n="addDoc"/></QuickSlot>
                        <QuickSlot $w={23}><Caret/></QuickSlot>
                    </Quick>
                    <Title>
                        广联达BIM土建计量平台 GTJ2021 - [C:\Users\zhangsr\Desktop\章斯睿Zf20231115工程1 11.27.GTJ]
                        <NewBadge>NEW</NewBadge>
                    </Title>
                    <WinBtns>
                        <WinBtn><G n="thin" size={16} tint="#444"/></WinBtn>
                        <WinBtn><G n="win2" size={14} tint="#444"/></WinBtn>
                        <WinBtn><G n="close" size={14} tint="#444"/></WinBtn>
                    </WinBtns>
                </TitleRow>
                <TabRow>
                    <Tab>开始</Tab>
                    <Tab>工程设置</Tab>
                    <Tab $on>建模</Tab>
                    <Tab $wide>工程量</Tab>
                    <Tab>视图</Tab>
                    <Tab>工具</Tab>
                    <Tab>云应用</Tab>
                    <Tab $wide>协同建模(限免)</Tab>
                    <Tab>施工算量</Tab>
                    <HelpBox>
                        土建计量GTJ中，全楼/相邻楼层三维显示图元/轴网有错
                        <G n="search" size={18} tint="#bbb"/>
                    </HelpBox>
                    <HeadIcons>
                        <HeadIcon $w={38}><G n="user" tint="#777"/></HeadIcon>
                        <HeadIcon $w={20}><G n="chat" tint="#777"/></HeadIcon>
                        <HeadIcon $w={32}>?<Caret $ml={2} $c="#666"/></HeadIcon>
                        <HeadIcon $w={36}><G n="shirt" tint="#777"/></HeadIcon>
                        <HeadIcon $w={19}><G n="up" size={18} tint="#555"/></HeadIcon>
                    </HeadIcons>
                </TabRow>
            </HeadRows>
        </Header>

        <Ribbon>
            <Group $w={291}>
                <GroupBody>
                    <BigTool $w={65}>
                        <BigPic>
                            <svg width="30" height="40" viewBox="0 0 30 40">
                                <path d="M7 3l19 24-19 6z" fill="#cfe3fa" stroke="#2f86e8" strokeWidth="2" strokeLinejoin="round"/>
                            </svg>
                        </BigPic>
                        选择
                    </BigTool>
                    <Col $w={124}>
                        <Tool g="pick" t="抬取构件"/>
                        <Tool g="batch" t="批量选择"/>
                        <Tool g="attr" t="按属性选择" menu/>
                    </Col>
                    <Col $w={100}>
                        <Tool g="find" t="查找图元"/>
                        <Tool g="filter" t="过滤图元" off/>
                    </Col>
                </GroupBody>
                <GroupFoot $pl={7}>选择</GroupFoot>
            </Group>
            <Group $w={242}>
                <GroupBody $pl={10}>
                    <Col $w={99}>
                        <Tool g="scale" t="设置比例" off/>
                        <Tool g="replace" t="查找替换" off/>
                        <Tool g="restore" t="还原CAD" off/>
                    </Col>
                    <Col $w={130}>
                        <Tool g="table" t="识别楼层表" off/>
                        <Tool g="cad" t="CAD识别选项"/>
                    </Col>
                </GroupBody>
                <GroupFoot>图纸操作<Caret $ml={8}/></GroupFoot>
            </Group>
            <Group $w={346}>
                <GroupBody $pl={11}>
                    <Col $w={83}>
                        <Tool g="define" t="定义"/>
                        <Tool g="cloud" t="云检查"/>
                        <Tool g="lock" t="锁定" menu/>
                    </Col>
                    <Col $w={140}>
                        <Tool g="copyTo" t="复制到其它层" menu/>
                        <Tool g="levelTop" t="自动平齐顶板" menu/>
                        <Tool g="diskFind" t="图元存盘" menu/>
                    </Col>
                    <Col $w={110}>
                        <Tool g="twoAxis" t="两点辅轴" menu/>
                        <Tool g="dim" t="长度标注" menu/>
                        <Tool g="convert" t="转换图元"/>
                    </Col>
                </GroupBody>
                <GroupFoot>通用操作<Caret $ml={8}/></GroupFoot>
            </Group>
            <Group $w={296}>
                <GroupBody $pl={10}>
                    <Col $w={67}>
                        <Tool g="del" t="删除"/>
                        <Tool g="copy" t="复制"/>
                        <Tool g="move" t="移动"/>
                    </Col>
                    <Col $w={68}>
                        <Tool g="rotate" t="旋转"/>
                        <Tool g="mirror" t="镜像"/>
                        <Tool g="extend" t="延伸"/>
                    </Col>
                    <Col $w={78}>
                        <Tool g="trim" t="修剪"/>
                        <Tool g="alignB" t="对齐" menu/>
                        <Tool g="merge" t="打断"/>
                    </Col>
                    <Col $w={60}>
                        <Tool g="offset" t="偏移"/>
                        <Tool g="merge" t="合并"/>
                        <Tool g="split" t="分割" off/>
                    </Col>
                </GroupBody>
                <GroupFoot>修改<Caret $ml={8}/></GroupFoot>
            </Group>
            <Group $w={83}>
                <GroupBody $pl={9}>
                    <Col $w={40}>
                        <IconRow><G n="point"/></IconRow>
                        <IconRow><G n="lineTool"/></IconRow>
                        <IconRow><G n="arc"/><Caret/></IconRow>
                    </Col>
                    <Col $w={30}>
                        <IconRow><G n="dial"/></IconRow>
                        <IconRow><G n="rectTool"/></IconRow>
                    </Col>
                </GroupBody>
                <GroupFoot $pl={6}>绘图</GroupFoot>
            </Group>
            <Group $w={287}>
                <GroupBody $pl={12}>
                    <BigTool $w={79} $off>
                        <BigPic>
                            <Ic viewBox="0 0 40 40" $size={40} $off>
                                <path d="M4 20V6h12M22 4h14v18H22zM22 13h14M29 4v18M8 24h14v12H8zM8 30h14M15 24v12" strokeWidth="2"/>
                                <circle cx="30" cy="30" r="5" strokeWidth="2"/>
                            </Ic>
                        </BigPic>
                        识别连梁表
                    </BigTool>
                    <BigTool $w={66} $off>
                        <BigPic>
                            <Ic viewBox="0 0 40 40" $size={40} $off>
                                <path d="M3 4h32L20 22v14l-4-4V22zM9 4l18 22" strokeWidth="2.200"/>
                                <circle cx="29" cy="29" r="6" strokeWidth="2.200"/>
                                <path d="M33 33l4 4" strokeWidth="2.200"/>
                            </Ic>
                        </BigPic>
                        识别梁
                    </BigTool>
                    <Col $w={130}>
                        <Tool g="check" t="校核梁图元" off/>
                        <Tool g="checkAnno" t="校核原位标注" off/>
                        <Tool g="beamParts" t="识别梁构件" off/>
                    </Col>
                </GroupBody>
                <GroupFoot $pl={4}>识别连梁</GroupFoot>
            </Group>
            <Group $w={98}>
                <GroupBody>
                    <BigTool $w={80}>
                        <BigPic>
                            <svg width="40" height="42" viewBox="0 0 40 42" fill="none">
                                <path d="M7 7h30M7 21h24M7 33h14M17 1v36M29 1v22" stroke="#4d5763" strokeWidth="2.400"/>
                                <circle cx="4" cy="7" r="3" fill="#fff" stroke="#4d5763" strokeWidth="2"/>
                                <circle cx="4" cy="21" r="3" fill="#fff" stroke="#4d5763" strokeWidth="2"/>
                                <circle cx="4" cy="33" r="3" fill="#fff" stroke="#4d5763" strokeWidth="2"/>
                                <path d="M24 30v-4h4M34 26h4v4M38 36v4h-4M28 40h-4v-4" stroke="#2f86e8" strokeWidth="2"/>
                                <circle cx="31" cy="33" r="1.500" fill="#2f86e8"/>
                            </svg>
                        </BigPic>
                        智能布置
                        <Caret $mt={9}/>
                    </BigTool>
                </GroupBody>
                <GroupFoot $pl={4}>智能布置</GroupFoot>
            </Group>
            <Group $w={251}>
                <GroupBody $pl={11}>
                    <Col $w={127}>
                        <Tool g="anno" t="原位标注" menu/>
                        <Tool g="respan" t="重提梁跨"/>
                        <Tool g="sameName" t="应用到同名梁"/>
                    </Col>
                    <Col $w={110}>
                        <Tool g="elev" t="查改标高"/>
                        <Tool g="arch" t="设置拱梁" menu/>
                        <Tool g="earth" t="生成土方"/>
                    </Col>
                </GroupBody>
                <GroupFoot $pl={6}>连梁二次编辑</GroupFoot>
            </Group>
        </Ribbon>

        <SelectBar>
            {['首层', '梁', '连梁', 'LL-1', '分层1'].map(s => (
                <Select key={s}>{s}<Caret $c="#555"/></Select>
            ))}
        </SelectBar>

        <Main>
            <NavPanel>
                <Strip><G n="close" size={13} tint="#aaa"/></Strip>
                <PanelHead>导航栏</PanelHead>
                <ToolStrip>
                    <SparkBox><G n="sparkle"/></SparkBox>
                    <ViewToggle $ml={168}><G n="listView"/></ViewToggle>
                    <ViewToggle $ml={5}><G n="detailView"/></ViewToggle>
                </ToolStrip>
                <Tree>
                    {navItems.map(t => <TreeRow key={t}><Arrow/>{t}</TreeRow>)}
                    <TreeRow><Arrow $open/>梁</TreeRow>
                    <TreeRow $child><ChildPill><G n="beamL"/>梁(L)</ChildPill></TreeRow>
                    <TreeRow $child><ChildPill $on><G n="beamG"/>连梁(G)</ChildPill></TreeRow>
                    <TreeRow $child><ChildPill><G n="beamE"/>圈梁(E)</ChildPill></TreeRow>
                    {navItemsAfter.map(t => <TreeRow key={t}><Arrow/>{t}</TreeRow>)}
                </Tree>
            </NavPanel>

            <MidColumn>
                <ListPanel>
                    <Strip><G n="close" size={13} tint="#aaa"/></Strip>
                    <TabHead>
                        <PanelTab $on>构件列表</PanelTab>
                        <PanelTab>图纸管理</PanelTab>
                    </TabHead>
                    <ToolStrip>
                        <ListTool $ml={3}><G n="newDoc"/>新建<Caret $ml={4}/></ListTool>
                        <ListTool $ml={15}><G n="copy"/>复制</ListTool>
                        <ListTool $ml={17}><G n="del"/>删除</ListTool>
                        <ListTool $ml={13}><G n="copy"/>层间复制</ListTool>
                        <MoreBtn>▸▸</MoreBtn>
                    </ToolStrip>
                    <SearchRow>
                        搜索构件...
                        <G n="search" size={17} tint="#aaa"/>
                    </SearchRow>
                    <CompRoot><Arrow $open/>连梁</CompRoot>
                    <CompItem>LL-1</CompItem>
                </ListPanel>
                <AttrPanel>
                    <Strip><G n="close" size={13} tint="#aaa"/></Strip>
                    <AttrHead>属性列表</AttrHead>
                    <AttrBody>
                        <AttrTable>
                            <colgroup>
                                <TableCol $w={27}/>
                                <TableCol $w={126}/>
                                <TableCol $w={125}/>
                                <TableCol $w={51}/>
                            </colgroup>
                            <thead>
                                <tr>
                                    <HeadCell/>
                                    <HeadCell>属性名称</HeadCell>
                                    <HeadCell $on>属性值</HeadCell>
                                    <HeadCell>附加</HeadCell>
                                </tr>
                            </thead>
                            <tbody>
                                {attrs.map(([name, value, hasCheck, plain], i) => (
                                    <tr key={i}>
                                        <NumCell $on={i === 13}>{i + 1}</NumCell>
                                        <NameCell $plain={plain}>{name}</NameCell>
                                        <ValueCell $on={i === 13}>{value}</ValueCell>
                                        <CheckCell>{hasCheck && <CheckBox/>}</CheckCell>
                                    </tr>
                                ))}
                            </tbody>
                        </AttrTable>
                        <ScrollTrack><ScrollThumb/></ScrollTrack>
                    </AttrBody>
                </AttrPanel>
            </MidColumn>

            <Gutter><Splitter/></Gutter>

            <Canvas>
                <Scene/>
                <SideBar>
                    <SideSlot $h={38}>
                        <Ic viewBox="0 0 30 30" $size={31} $tint="#777">
                            <ellipse cx="15" cy="15" rx="13" ry="10" transform="rotate(-25 15 15)" strokeWidth="1.800"/>
                            <path d="M4 20C10 26 25 20 27 6" stroke="#3a8ee6" strokeWidth="2"/>
                        </Ic>
                    </SideSlot>
                    <SideSlot $h={38}>
                        <Ic viewBox="0 0 30 30" $size={31} $tint="#777">
                            <rect x="3" y="3" width="24" height="24" rx="2" strokeWidth="1.600"/>
                            <text x="6" y="24" fontSize="10" fontWeight="700" fill="#3a8ee6" stroke="none" fontFamily='"Liberation Sans", sans-serif'>2D</text>
                        </Ic>
                    </SideSlot>
                    <SideSlot $h={34}>
                        <Ic viewBox="0 0 30 30" $size={31} $tint="#777">
                            <path d="M3 9h19v19H3zM22 9l5-6v19l-5 6" strokeWidth="1.600"/>
                            <path d="M3 9l5-6h19l-5 6" stroke="#3a8ee6" strokeWidth="1.800"/>
                        </Ic>
                    </SideSlot>
                    <SideSlot $h={12}><Caret $c="#555"/></SideSlot>
                    <SideSlot $h={36}>
                        <Ic viewBox="0 0 30 30" $size={31}>
                            <path d="M3 9h19v19H3z" fill="#cfe3fa" stroke="#3a8ee6" strokeWidth="1.800"/>
                            <path d="M22 9l5-6v19l-5 6M3 9l5-6h19l-5 6" fill="#cfe3fa" stroke="#3a8ee6" strokeWidth="1.800"/>
                        </Ic>
                    </SideSlot>
                    <SideSlot $h={14}><Caret $c="#555"/></SideSlot>
                    <SideSlot $h={32}>
                        <Ic viewBox="0 0 30 30" $size={31} $tint="#666">
                            <path d="M3 9V3h7M20 3h7v6M27 21v6h-7M10 27H3v-6" strokeWidth="1.800"/>
                        </Ic>
                    </SideSlot>
                    <SideSlot $h={44}>
                        <Ic viewBox="0 0 30 30" $size={31} $tint="#666">
                            <rect x="2.500" y="2.500" width="25" height="25" rx="2" strokeDasharray="3 2" strokeWidth="1.600"/>
                            <path d="M15 7l7 4v8l-7 4-7-4v-8zM8 11l7 4 7-4M15 15v8" stroke="#3a8ee6" strokeWidth="1.600"/>
                        </Ic>
                    </SideSlot>
                    <SideRule/>
                    <SideSlot $h={38}>
                        <Ic viewBox="0 0 30 30" $size={31} $tint="#666">
                            <path d="M16 27H3V3h24v15" strokeWidth="1.600"/>
                            <path d="M8 9h3M14 9h8M8 14h3M14 14h5M8 19h3" strokeWidth="1.500"/>
                            <ellipse cx="23" cy="24" rx="6" ry="3.500" stroke="#3a8ee6" strokeWidth="1.500"/>
                            <circle cx="23" cy="24" r="1.500" fill="#3a8ee6" stroke="none"/>
                        </Ic>
                    </SideSlot>
                </SideBar>
            </Canvas>
        </Main>

        <StatusBar>
            <Read $w={329} $ws={4.500}>X = 41978 Y = 3679 Z = 14621</Read>
            <Read $w={49}>层高：</Read>
            <Read $w={55}>3.9</Read>
            <Read $w={49}>标高：</Read>
            <Read $w={116}>-0.05~3.85</Read>
            <Read $w={129}>0</Read>
            <Read $w={45}>隐藏：</Read>
            <Read $w={84}>0</Read>
            <StatusBtn $w={34}>
                <Ic viewBox="0 0 20 20"><path d="M6 3v13h11M6 12h4v4"/></Ic>
            </StatusBtn>
            <StatusBtn $w={44} $on $ml={1}>
                <Ic viewBox="0 0 20 20"><rect x="3" y="4" width="14" height="13" rx="2"/><circle cx="3.500" cy="4" r="1.600" fill="#3a8ee6" stroke="none"/></Ic>
                <Caret $c="#555"/>
            </StatusBtn>
            <StatusBtn $w={32} $ml={8}>
                <Ic viewBox="0 0 20 20" $tint="#aaa" $size={24}><path d="M3 2l14 16M17 2L3 18"/></Ic>
            </StatusBtn>
            <StatusBtn $w={40} $ml={12}>
                <Ic viewBox="0 0 20 20" $tint="#888"><path d="M3 16h14M3 16l10-11"/></Ic>
                <Caret $c="#555"/>
            </StatusBtn>
            <StatusBtn $w={45} $ml={4}>
                <Ic viewBox="0 0 20 20"><path d="M6 3v8M2 7h8"/><rect x="9" y="12" width="9" height="4" fill="#666" stroke="none"/></Ic>
                <Caret $c="#555"/>
            </StatusBtn>
            <StatusBtn $w={30} $ml={4}>
                <Ic viewBox="0 0 20 20"><rect x="3" y="3" width="11" height="14" fill="#666"/><path d="M12 8l6 9h-6z" fill="#444" stroke="none"/></Ic>
            </StatusBtn>
            <StatusBtn $w={30} $ml={5}>
                <Ic viewBox="0 0 20 20"><path d="M4 17V10c0-4 5-6 11-7"/><path d="M11 10l6 5-6 2z" fill="#666" stroke="none"/></Ic>
            </StatusBtn>
            <Hint>按鼠标左键指定第一个角点，或拾取构件图元</Hint>
        </StatusBar>

        <Taskbar>
            <StartBtn>
                <svg width="22" height="22" viewBox="0 0 22 22" fill="#fff">
                    <path d="M0 3.200l9-1.300v8.600H0zM10 1.800L22 0v10.500H10zM0 11.500h9v8.600l-9-1.300zM10 11.500h12V22l-12-1.800z"/>
                </svg>
            </StartBtn>
            <TaskSearch>
                <svg width="22" height="24" viewBox="0 0 22 24" fill="none" stroke="#ddd" strokeWidth="1.500">
                    <circle cx="14" cy="9" r="7"/>
                    <path d="M9 14L2 23"/>
                </svg>
                在这里输入你要搜索的内容
            </TaskSearch>
            <TaskSlot $w={62}>
                <svg width="22" height="22" viewBox="0 0 22 22" fill="none" stroke="#fff" strokeWidth="3">
                    <circle cx="11" cy="11" r="8"/>
                </svg>
            </TaskSlot>
            <TaskSlot $w={56}>
                <svg width="22" height="24" viewBox="0 0 22 24" fill="none" stroke="#fff" strokeWidth="1.600">
                    <path d="M1 1h13M1 23h13M1 8h13v8H1zM20 1v5M20 19v5"/>
                    <circle cx="20" cy="12" r="1.500" fill="#fff" stroke="none"/>
                </svg>
            </TaskSlot>
            <TaskSlot $w={73}>
                <svg width="28" height="28" viewBox="0 0 28 28">
                    <path d="M1 1h10l2 3h14v23H1z" fill="#f3c33c"/>
                    <rect x="1" y="7" width="26" height="20" fill="#fbd95c"/>
                    <path d="M9 27v-9h10v9h-3v-5h-4v5z" fill="#3a9be0"/>
                </svg>
            </TaskSlot>
            <TaskSlot $w={53} $open>
                <svg width="30" height="30" viewBox="0 0 30 30">
                    <circle cx="15" cy="15" r="15" fill="#2f9e44"/>
                    <path d="M15 0a15 15 0 0 1 13 7.500H15a7.500 7.500 0 0 0-7 5L2 7.500A15 15 0 0 1 15 0z" fill="#e03a30"/>
                    <path d="M28 7.500A15 15 0 0 1 15 30l6.500-11a7.500 7.500 0 0 0 0-11.500z" fill="#f7c52c"/>
                    <circle cx="15" cy="15" r="7" fill="#fff"/>
                    <circle cx="15" cy="15" r="5.300" fill="#4285f4"/>
                </svg>
            </TaskSlot>
            <TaskSlot $w={51} $ml={10} $open>
                <svg width="30" height="36" viewBox="0 0 30 36">
                    <rect width="30" height="36" rx="3" fill="#2a5d9c"/>
                    <rect x="1" y="1" width="28" height="5" fill="#8aa2bd"/>
                    <text x="15" y="24" textAnchor="middle" fontSize="12" fontWeight="700" fill="#d9e8f7" fontFamily='"Liberation Sans", sans-serif'>CAD</text>
                </svg>
            </TaskSlot>
            <TaskSlot $w={61} $ml={6} $open $active>
                <svg width="30" height="36" viewBox="0 0 30 36">
                    <rect width="30" height="36" rx="4" fill="#e8f6fd"/>
                    <path d="M6 6h18a2.500 2.500 0 0 1 2.500 2.500c0 2-1.500 3.500-3.500 3.500h-4l-.8 14a3.500 3.500 0 0 1-7 0L10.500 12H7c-2 0-3.500-1.500-3.500-3.500A2.500 2.500 0 0 1 6 6z" fill="#1fa3ef"/>
                </svg>
            </TaskSlot>
            <Tray>
                <TraySlot $w={30}><G n="up" size={17} tint="#fff"/></TraySlot>
                <TraySlot $w={30}>
                    <svg width="20" height="18" viewBox="0 0 20 18">
                        <rect x="5" y="4" width="14" height="11" fill="#fff" stroke="#fff"/>
                        <path d="M1 0h4v5H1z" fill="#fff"/>
                    </svg>
                </TraySlot>
                <TraySlot $w={30}>
                    <svg width="20" height="24" viewBox="0 0 20 24" fill="none" stroke="#fff" strokeWidth="1.300">
                        <path d="M5 1h14v15H5zM1 4h4v14H1zM7 21h12M13 16v5"/>
                    </svg>
                </TraySlot>
                <TraySlot $w={28}>
                    <svg width="20" height="22" viewBox="0 0 20 22" fill="none" stroke="#fff" strokeWidth="1.200">
                        <path d="M1 8h4l5-5v16l-5-5H1zM13 7c2 2 2 6 0 8M16 4c3 4 3 10 0 14" />
                    </svg>
                </TraySlot>
                <TraySlot $w={30} $fs={18}>英</TraySlot>
                <Clock>
                    <span>18:33</span>
                    <span>2021/11/27</span>
                </Clock>
                <TraySlot $w={54}>
                    <svg width="22" height="22" viewBox="0 0 22 22">
                        <path d="M0 1h21v18H0z" fill="#fff"/>
                        <path d="M4 6h13M4 10h13M4 14h8" stroke="#111" strokeWidth="1.500"/>
                    </svg>
                    <NoteBadge>2</NoteBadge>
                </TraySlot>
            </Tray>
        </Taskbar>
    </Page>
);

export default App;
